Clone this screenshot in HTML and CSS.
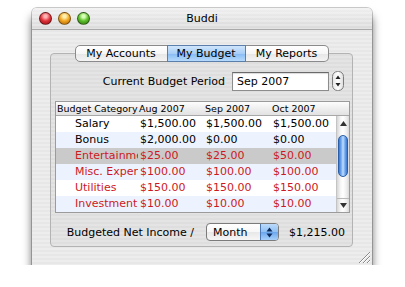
FILE: index.html
```html
<!DOCTYPE html>
<html>
<head>
<meta charset="utf-8">
<link rel="stylesheet" href="styles.css">
</head>
<body>
<div class="window">
  <div class="titlebar">
    <div class="lights">
      <span class="light red"></span>
      <span class="light yellow"></span>
      <span class="light green"></span>
    </div>
    <div class="title">Buddi</div>
    <div></div>
  </div>
  <div class="content">
    <div class="tabs">
      <div class="tab tab-accounts">My Accounts</div>
      <div class="tab tab-budget active">My Budget</div>
      <div class="tab tab-reports">My Reports</div>
    </div>
    <div class="box">
      <div class="period-row">
        <span class="label">Current Budget Period</span>
        <div class="field">Sep 2007</div>
        <div class="stepper">
          <svg width="12" height="20" viewBox="0 0 12 20">
            <defs>
              <linearGradient id="stg" x1="0" y1="0" x2="1" y2="0">
                <stop offset="0" stop-color="#e4e4e4"/>
                <stop offset="0.5" stop-color="#ffffff"/>
                <stop offset="1" stop-color="#dcdcdc"/>
              </linearGradient>
            </defs>
            <rect x="0.5" y="0.5" width="11" height="19" rx="5" fill="url(#stg)" stroke="#7c7c7c"/>
            <path d="M3.5 8 L6 4.5 L8.5 8 Z" fill="#222"/>
            <path d="M3.5 12 L6 15.5 L8.5 12 Z" fill="#222"/>
          </svg>
        </div>
      </div>
      <div class="table">
        <div class="thead">
          <div class="th">Budget Category</div>
          <div class="th">Aug 2007</div>
          <div class="th">Sep 2007</div>
          <div class="th">Oct 2007</div>
          <div class="th"></div>
        </div>
        <div class="tbody">
          <div class="rows">
            <div class="row">
              <div class="cell cat">Salary</div><div class="cell">$1,500.00</div><div class="cell">$1,500.00</div><div class="cell">$1,500.00</div>
            </div>
            <div class="row alt">
              <div class="cell cat">Bonus</div><div class="cell">$2,000.00</div><div class="cell">$0.00</div><div class="cell">$0.00</div>
            </div>
            <div class="row sel expense">
              <div class="cell cat">Entertainment</div><div class="cell">$25.00</div><div class="cell">$25.00</div><div class="cell">$50.00</div>
            </div>
            <div class="row alt expense">
              <div class="cell cat">Misc. Expenses</div><div class="cell">$100.00</div><div class="cell">$100.00</div><div class="cell">$100.00</div>
            </div>
            <div class="row expense">
              <div class="cell cat">Utilities</div><div class="cell">$150.00</div><div class="cell">$150.00</div><div class="cell">$150.00</div>
            </div>
            <div class="row alt expense">
              <div class="cell cat">Investment Expenses</div><div class="cell">$10.00</div><div class="cell">$10.00</div><div class="cell">$10.00</div>
            </div>
          </div>
          <div class="scrollbar">
            <div class="sb-up">
              <svg width="7" height="5" viewBox="0 0 7 5"><path d="M0 5 L3.5 0 L7 5 Z" fill="#333"/></svg>
            </div>
            <div class="sb-track">
              <div class="thumb"></div>
            </div>
            <div class="sb-down">
              <svg width="7" height="5" viewBox="0 0 7 5"><path d="M0 0 L3.5 5 L7 0 Z" fill="#333"/></svg>
            </div>
          </div>
        </div>
      </div>
      <div class="bottom-row">
        <span class="label">Budgeted Net Income /</span>
        <div class="popup">
          <span class="popup-text">Month</span>
          <span class="popup-arrows">
            <svg width="7" height="11" viewBox="0 0 7 11">
              <path d="M0.5 4.5 L3.5 0.5 L6.5 4.5 Z" fill="#0d2a5c"/>
              <path d="M0.5 6.5 L3.5 10.5 L6.5 6.5 Z" fill="#0d2a5c"/>
            </svg>
          </span>
        </div>
        <span class="amount">$1,215.00</span>
      </div>
    </div>
  </div>
  <div class="grip">
    <svg width="12" height="11" viewBox="0 0 12 11">
      <path d="M1 11 L12 0 M5 11 L12 4 M9 11 L12 8" stroke="#8a8a8a" stroke-width="1"/>
      <path d="M2 11 L12 1 M6 11 L12 5 M10 11 L12 9" stroke="#ffffff" stroke-width="1"/>
    </svg>
  </div>
</div>
</body>
</html>
```

FILE: styles.css
```css
* { box-sizing: border-box; }

html, body {
  margin: 0;
  padding: 0;
  background: #ffffff;
  font-family: "DejaVu Sans", "Liberation Sans", sans-serif;
  color: #000;
}

.window {
  position: relative;
  margin: 8px 0 0 32px;
  width: 340px;
  height: 257px;
  border-radius: 5px 5px 0 0;
  background: repeating-linear-gradient(to bottom, #ededed 0 2px, #e7e7e7 2px 4px);
  box-shadow: 0 0 0 1px rgba(0,0,0,0.2), 0 8px 10px 0 rgba(0,0,0,0.6);
  display: flex;
  flex-direction: column;
}

.titlebar {
  height: 22px;
  display: grid;
  grid-template-columns: 1fr auto 1fr;
  align-items: center;
  border-bottom: 1px solid #a9a9a9;
  border-radius: 5px 5px 0 0;
  background:
    repeating-linear-gradient(to bottom, rgba(255,255,255,0.25) 0 2px, rgba(0,0,0,0) 2px 4px),
    linear-gradient(to bottom, #efefef, #dadada);
}

.lights {
  display: flex;
  gap: 6px;
  padding-left: 7px;
}

.light {
  width: 13px;
  height: 13px;
  border-radius: 50%;
  border: 1px solid rgba(0,0,0,0.45);
}
.light.red { background: radial-gradient(circle at 50% 30%, #ffb3b3 0 15%, #e0323a 50%, #8e0d10 100%); }
.light.yellow { background: radial-gradient(circle at 50% 30%, #fff0b0 0 15%, #f1a621 50%, #a55b06 100%); }
.light.green { background: radial-gradient(circle at 50% 30%, #d8ffb8 0 15%, #5cbf2a 50%, #2b6e0c 100%); }

.title {
  font-size: 11px;
  color: #000;
}

.content {
  flex: 1;
  padding: 15px 19px 0 18px;
  display: flex;
  flex-direction: column;
}

.tabs {
  display: flex;
  justify-content: center;
  height: 17px;
  margin-bottom: -9px;
  position: relative;
  z-index: 1;
}

.tab {
  font-size: 11px;
  display: flex;
  align-items: center;
  justify-content: center;
  border: 1px solid #8a8a8a;
  border-left-width: 0;
  background: linear-gradient(to bottom, #ffffff 0%, #f6f6f6 50%, #e6e6e6 51%, #f4f4f4 100%);
  color: #000;
}
.tab-accounts { width: 93px; border-left-width: 1px; border-radius: 5px 0 0 5px; }
.tab-budget { width: 79px; }
.tab-reports { width: 83px; border-radius: 0 5px 5px 0; }

.tab.active {
  background: linear-gradient(to bottom, #cfe5fc 0%, #a8cef7 50%, #86bbf3 51%, #b6dafd 100%);
  border-color: #5b7fab;
  border-left-width: 1px;
  margin-left: -1px;
}

.box {
  height: 194px;
  border: 1px solid #b3b3b3;
  border-radius: 4px;
  background: rgba(0,0,0,0.035);
  padding: 17px 2px 0 4px;
  display: flex;
  flex-direction: column;
}

.period-row {
  display: flex;
  align-items: center;
  justify-content: flex-end;
  height: 20px;
  padding-right: 6px;
}

.label {
  font-size: 11px;
  color: #000;
}

.period-row .label { margin-right: 7px; }

.field {
  width: 97px;
  height: 19px;
  background: #fff;
  border: 1px solid #8c8c8c;
  border-top-color: #6a6a6a;
  box-shadow: inset 0 1px 1px rgba(0,0,0,0.15);
  font-size: 11px;
  padding-left: 4px;
  display: flex;
  align-items: center;
}

.stepper {
  margin-left: 3px;
  display: flex;
}

.table {
  margin-top: 10px;
  width: 295px;
  border: 1px solid #9b9b9b;
  background: #fff;
}

.thead {
  display: grid;
  grid-template-columns: 82px 66px 67px 65px 13px;
  height: 14px;
  border-bottom: 1px solid #a8a8a8;
  background: linear-gradient(to bottom, #fdfdfd, #ececec 60%, #e2e2e2);
}

.th {
  font-size: 9.5px;
  line-height: 13px;
  padding-left: 1px;
  white-space: nowrap;
  overflow: hidden;
  color: #000;
}

.tbody {
  display: flex;
}

.rows {
  display: flex;
  flex-direction: column;
}

.row {
  display: grid;
  grid-template-columns: 82px 66px 67px 65px;
  height: 16px;
  background: #fff;
}
.row.alt { background: #edf3fe; }
.row.sel { background: #cacaca; }
.row.expense { color: #cc1a22; }

.cell {
  font-size: 11px;
  line-height: 16px;
  padding-left: 2px;
  white-space: nowrap;
  overflow: hidden;
}
.cell.cat { padding-left: 19px; }

.scrollbar {
  width: 13px;
  display: flex;
  flex-direction: column;
  background: linear-gradient(to right, #d6d6d6, #f6f6f6 30%, #ffffff 50%, #ededed 80%, #d9d9d9);
  border-left: 1px solid #c4c4c4;
}

.sb-up {
  height: 13px;
  display: flex;
  align-items: center;
  justify-content: center;
  padding-top: 2px;
}

.sb-track {
  flex: 1;
  padding: 6px 1px 0 1px;
}

.thumb {
  height: 42px;
  border-radius: 6px;
  border: 1px solid #2a5ea8;
  background: linear-gradient(to right, #3c79d6 0%, #79b0f2 30%, #c2defb 50%, #6ea6ee 75%, #3b76d2 100%);
}

.sb-down {
  height: 14px;
  border-top: 1px solid #b8b8b8;
  display: flex;
  align-items: center;
  justify-content: center;
}

.bottom-row {
  margin-top: 10px;
  height: 18px;
  display: flex;
  align-items: center;
  justify-content: flex-end;
  padding-right: 5px;
}

.bottom-row .label { margin-right: 12px; }

.popup {
  width: 73px;
  height: 18px;
  border: 1px solid #7b7b7b;
  border-radius: 4px;
  display: flex;
  overflow: hidden;
  background: linear-gradient(to bottom, #ffffff 0%, #f7f7f7 50%, #e8e8e8 51%, #f6f6f6 100%);
}

.popup-text {
  flex: 1;
  font-size: 11px;
  padding-left: 6px;
  display: flex;
  align-items: center;
}

.popup-arrows {
  width: 18px;
  display: flex;
  align-items: center;
  justify-content: center;
  border-left: 1px solid #4c78b5;
  background: linear-gradient(to bottom, #bcdafb 0%, #8fc0f3 50%, #6aa6ee 51%, #a8d0fa 100%);
}

.amount {
  margin-left: 10px;
  font-size: 11px;
}

.grip {
  position: absolute;
  right: 2px;
  bottom: 2px;
  display: flex;
}
```
